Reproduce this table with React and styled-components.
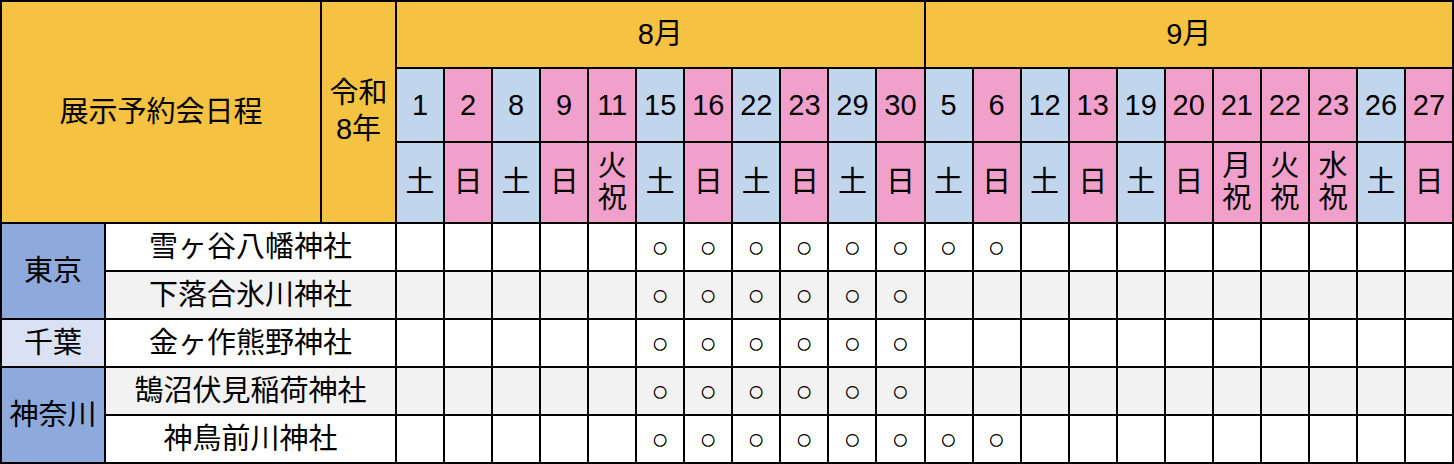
import React from "react";
import styled, { createGlobalStyle } from "styled-components";

const GlobalStyle = createGlobalStyle`
  html, body {
    margin: 0;
    padding: 0;
    background: #fff;
  }
  body {
    font-family: "Liberation Sans", "Noto Sans CJK JP", sans-serif;
    color: #000;
  }
`;

const colors = {
  gold: "#f5c242",
  blue: "#c1d6ec",
  pink: "#f1a0cb",
  region: "#8ea9db",
  regionLight: "#d9e1f2",
  gray: "#f2f2f2",
  white: "#ffffff",
};

const months = [
  {
    label: "8月",
    days: [
      { d: 1, w: ["土"], off: false },
      { d: 2, w: ["日"], off: true },
      { d: 8, w: ["土"], off: false },
      { d: 9, w: ["日"], off: true },
      { d: 11, w: ["火", "祝"], off: true },
      { d: 15, w: ["土"], off: false },
      { d: 16, w: ["日"], off: true },
      { d: 22, w: ["土"], off: false },
      { d: 23, w: ["日"], off: true },
      { d: 29, w: ["土"], off: false },
      { d: 30, w: ["日"], off: true },
    ],
  },
  {
    label: "9月",
    days: [
      { d: 5, w: ["土"], off: false },
      { d: 6, w: ["日"], off: true },
      { d: 12, w: ["土"], off: false },
      { d: 13, w: ["日"], off: true },
      { d: 19, w: ["土"], off: false },
      { d: 20, w: ["日"], off: true },
      { d: 21, w: ["月", "祝"], off: true },
      { d: 22, w: ["火", "祝"], off: true },
      { d: 23, w: ["水", "祝"], off: true },
      { d: 26, w: ["土"], off: false },
      { d: 27, w: ["日"], off: true },
    ],
  },
];

const allDays = months.flatMap((m) => m.days);

// indexes into allDays where a shrine holds an event
const augLate = [5, 6, 7, 8, 9, 10];
const withSep = [...augLate, 11, 12];

const regions = [
  {
    name: "東京",
    bg: colors.region,
    shrines: [
      { name: "雪ヶ谷八幡神社", open: withSep },
      { name: "下落合氷川神社", open: augLate },
    ],
  },
  {
    name: "千葉",
    bg: colors.regionLight,
    shrines: [{ name: "金ヶ作熊野神社", open: augLate }],
  },
  {
    name: "神奈川",
    bg: colors.region,
    shrines: [
      { name: "鵠沼伏見稲荷神社", open: augLate },
      { name: "神鳥前川神社", open: withSep },
    ],
  },
];

export default function App() {
  let rowIndex = 0;
  return (
    <>
      <GlobalStyle />
      <Table>
        <Cell $bg={colors.gold} $cols={2} $rows={3}>
          展示予約会日程
        </Cell>
        <Cell $bg={colors.gold} $rows={3}>
          <Stack $gap={4}>
            <span>令和</span>
            <span>8年</span>
          </Stack>
        </Cell>
        {months.map((m) => (
          <Cell key={m.label} $bg={colors.gold} $cols={m.days.length}>
            {m.label}
          </Cell>
        ))}

        {allDays.map((day, i) => (
          <Cell key={"d" + i} $bg={day.off ? colors.pink : colors.blue}>
            {day.d}
          </Cell>
        ))}
        {allDays.map((day, i) => (
          <Cell key={"w" + i} $bg={day.off ? colors.pink : colors.blue}>
            <Stack>
              {day.w.map((c) => (
                <span key={c}>{c}</span>
              ))}
            </Stack>
          </Cell>
        ))}

        {regions.map((region) =>
          region.shrines.map((shrine, si) => {
            const bg = rowIndex++ % 2 === 0 ? colors.white : colors.gray;
            return (
              <React.Fragment key={shrine.name}>
                {si === 0 && (
                  <Cell $bg={region.bg} $rows={region.shrines.length}>
                    {region.name}
                  </Cell>
                )}
                <Cell $bg={bg} $cols={2}>
                  {shrine.name}
                </Cell>
                {allDays.map((_, i) => (
                  <Cell key={i} $bg={bg}>
                    {shrine.open.includes(i) && <Mark>○</Mark>}
                  </Cell>
                ))}
              </React.Fragment>
            );
          })
        )}
      </Table>
    </>
  );
}

const Table = styled.div`
  display: grid;
  box-sizing: border-box;
  width: 1454px;
  padding: 2px;
  gap: 2px;
  background: #000;
  grid-template-columns: 102px 214px 73px repeat(22, 1fr);
  grid-template-rows: 65px 72px 79px repeat(5, 46px);
`;

const Cell = styled.div`
  display: flex;
  align-items: center;
  justify-content: center;
  text-align: center;
  min-width: 0;
  background: ${(p) => p.$bg || "#fff"};
  font-size: 29px;
  line-height: 1.2;
  white-space: nowrap;
  grid-column: ${(p) => (p.$cols ? `span ${p.$cols}` : "auto")};
  grid-row: ${(p) => (p.$rows ? `span ${p.$rows}` : "auto")};
`;

const Stack = styled.div`
  display: flex;
  flex-direction: column;
  align-items: center;
  gap: ${(p) => p.$gap || 0}px;
  line-height: 1.1;
`;

const Mark = styled.span`
  font-family: "Liberation Sans", sans-serif;
  font-size: 29px;
  line-height: 1;
`;
